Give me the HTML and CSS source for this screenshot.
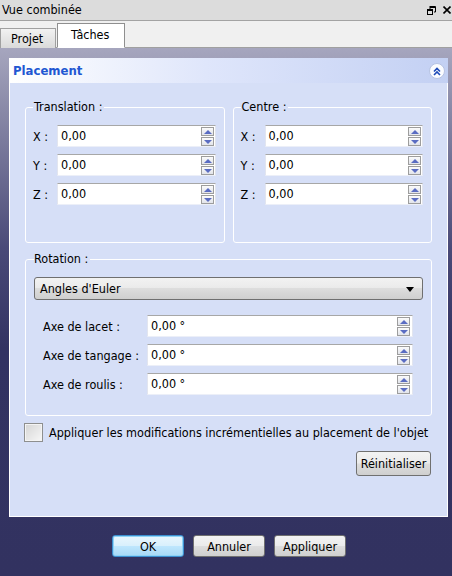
FILE: index.html
```html
<!DOCTYPE html>
<html lang="fr">
<head>
<meta charset="utf-8">
<title>Vue combinée</title>
<link rel="stylesheet" href="styles.css">
</head>
<body>
<div class="window">
  <div class="titlebar">
    <span class="title">Vue combinée</span>
    <div class="winbtns">
      <svg width="9" height="9" viewBox="0 0 9 9"><path d="M3 0.5h5.5v5.5h-1.5M3 1.5h5.5" fill="none" stroke="#000" stroke-width="1"/><path d="M3 0v3" stroke="#000"/><rect x="0.5" y="3.5" width="5" height="5" fill="none" stroke="#000"/><path d="M0.5 4.5h5" stroke="#000"/></svg>
      <svg width="8" height="8" viewBox="0 0 8 8"><path d="M0.5 0.5L7.5 7.5M7.5 0.5L0.5 7.5" stroke="#000" stroke-width="1.6"/></svg>
    </div>
  </div>
  <div class="tabbar">
    <div class="tab">Projet</div>
    <div class="tab active">Tâches</div>
  </div>
  <div class="taskarea">
    <div class="panel">
      <div class="panel-head">
        <span class="panel-title">Placement</span>
        <svg class="collapse" width="16" height="16" viewBox="0 0 16 16"><circle cx="8" cy="8" r="7.5" fill="#fbfcff" stroke="#b7c3e2"/><polyline points="5,8.5 8,5.5 11,8.5" fill="none" stroke="#1c49b8" stroke-width="1.6"/><polyline points="5,12 8,9 11,12" fill="none" stroke="#1c49b8" stroke-width="1.6"/></svg>
      </div>
      <div class="panel-body">
        <div class="groups-row">
          <fieldset class="group pos">
            <legend>Translation :</legend>
            <div class="row"><span class="lbl">X :</span><div class="field"><span class="val">0,00</span><span class="spin"><span class="up"></span><span class="dn"></span></span></div></div>
            <div class="row"><span class="lbl">Y :</span><div class="field"><span class="val">0,00</span><span class="spin"><span class="up"></span><span class="dn"></span></span></div></div>
            <div class="row"><span class="lbl">Z :</span><div class="field"><span class="val">0,00</span><span class="spin"><span class="up"></span><span class="dn"></span></span></div></div>
          </fieldset>
          <fieldset class="group pos">
            <legend>Centre :</legend>
            <div class="row"><span class="lbl">X :</span><div class="field"><span class="val">0,00</span><span class="spin"><span class="up"></span><span class="dn"></span></span></div></div>
            <div class="row"><span class="lbl">Y :</span><div class="field"><span class="val">0,00</span><span class="spin"><span class="up"></span><span class="dn"></span></span></div></div>
            <div class="row"><span class="lbl">Z :</span><div class="field"><span class="val">0,00</span><span class="spin"><span class="up"></span><span class="dn"></span></span></div></div>
          </fieldset>
        </div>
        <fieldset class="group rotation">
          <legend>Rotation :</legend>
          <div class="combo"><span>Angles d'Euler</span><span class="arrow"></span></div>
          <div class="rot-rows">
            <div class="row"><span class="lbl wide">Axe de lacet :</span><div class="field"><span class="val">0,00 °</span><span class="spin"><span class="up"></span><span class="dn"></span></span></div></div>
            <div class="row"><span class="lbl wide">Axe de tangage :</span><div class="field"><span class="val">0,00 °</span><span class="spin"><span class="up"></span><span class="dn"></span></span></div></div>
            <div class="row"><span class="lbl wide">Axe de roulis :</span><div class="field"><span class="val">0,00 °</span><span class="spin"><span class="up"></span><span class="dn"></span></span></div></div>
          </div>
        </fieldset>
        <div class="check"><span class="box"></span><span class="check-text">Appliquer les modifications incrémentielles au placement de l'objet</span></div>
        <div class="reset-row"><span class="btn reset">Réinitialiser</span></div>
      </div>
    </div>
    <div class="dialog-buttons">
      <span class="btn dlg default">OK</span>
      <span class="btn dlg">Annuler</span>
      <span class="btn dlg">Appliquer</span>
    </div>
  </div>
</div>
</body>
</html>
```

FILE: styles.css
```css
* { box-sizing: border-box; }
html, body { margin: 0; padding: 0; }
body {
  width: 452px;
  height: 576px;
  overflow: hidden;
  font-family: "DejaVu Sans Condensed", "DejaVu Sans", Verdana, sans-serif;
  font-size: 12.5px;
  color: #000;
}
.window { display: flex; flex-direction: column; height: 576px; }

.titlebar {
  height: 21px;
  background: #dcdcdc;
  border-bottom: 1px solid #a3a3a3;
  display: flex;
  align-items: center;
  justify-content: space-between;
  padding: 0 1px 1px 2px;
}
.winbtns { display: flex; align-items: center; gap: 7px; margin-top: 1px; }

.tabbar {
  height: 27px;
  background: #f0f0f0;
  border-bottom: 1px solid #a0a0a0;
  display: flex;
  align-items: flex-end;
}
.tab {
  height: 20px;
  width: 56px;
  border: 1px solid #a0a0a0;
  border-bottom: none;
  background: linear-gradient(#f2f2f2, #dadada);
  padding-left: 10px;
  line-height: 19px;
  margin-bottom: -1px;
  margin-right: 1px;
}
.tab.active {
  height: 25px;
  width: 68px;
  background: #fff;
  border-color: #8f8f8f;
  padding-left: 13px;
  line-height: 22px;
  border-bottom: 1px solid #fff;
}

.taskarea {
  flex: 1;
  background: linear-gradient(180deg, #a6a6be 0px, #8a8aa8 60px, #4a4a78 200px, #333362 300px, #323260 528px);
  padding: 10px 4px 0 9px;
  display: flex;
  flex-direction: column;
}

.panel { width: 439px; height: 459px; display: flex; flex-direction: column; }
.panel-head {
  height: 25px;
  background: linear-gradient(90deg, #ffffff 0%, #dfe6fb 45%, #c3d0f3 100%);
  display: flex;
  align-items: center;
  justify-content: space-between;
  padding: 0 3px 0 4px;
}
.panel-title { font-weight: bold; color: #2257d2; font-size: 13px; }
.collapse { display: block; }

.panel-body {
  flex: 1;
  background: #d6dff7;
  border: 1px solid #ffffff;
  border-top: none;
  padding: 17px 15px 0 15px;
  display: flex;
  flex-direction: column;
}

.groups-row { display: flex; gap: 8px; }

fieldset.group {
  margin: 0;
  min-width: 0;
  border: 1px solid #ffffff;
  border-radius: 3px;
}
fieldset.group legend {
  padding: 0 2px 0 1px;
  margin-left: 0;
  line-height: 14px;
}
.group.pos {
  width: 200px;
  padding: 11px 8px 37px 7px;
  display: flex;
  flex-direction: column;
  gap: 7px;
}

.row { display: flex; align-items: center; height: 22px; }
.lbl { width: 24px; flex: none; }
.lbl.wide { width: 104px; }
.field {
  flex: 1;
  height: 22px;
  background: #fff;
  border-top: 1px solid #a7a7a7;
  border-left: 1px solid #e2e5ef;
  border-right: 1px solid #e2e5ef;
  border-bottom: 1px solid #eceff8;
  display: flex;
  align-items: center;
  justify-content: space-between;
  padding: 0 1px 0 3px;
}
.val { line-height: 20px; }

.spin { display: flex; flex-direction: column; gap: 1px; }
.spin .up, .spin .dn {
  width: 13px;
  height: 9px;
  border: 1px solid #9d9d9d;
  background: linear-gradient(#fbfbfb, #e2e4ea);
  position: relative;
}
.spin .up::after, .spin .dn::after {
  content: "";
  position: absolute;
  left: 2px;
  width: 0; height: 0;
  border-left: 4px solid transparent;
  border-right: 4px solid transparent;
}
.spin .up::after { top: 2px; border-bottom: 4px solid #5a6cc2; }
.spin .dn::after { top: 2px; border-top: 4px solid #5a6cc2; }

.group.rotation {
  margin-top: 9px;
  padding: 11px 8px 20px 8px;
}
.group.rotation legend { padding-left: 0; }
.combo {
  height: 23px;
  border: 1px solid #6f6f6f;
  border-radius: 3px;
  background: linear-gradient(#f2f2f2 0%, #ebebeb 45%, #dddddd 50%, #cfcfcf 100%);
  display: flex;
  align-items: center;
  justify-content: space-between;
  padding: 0 8px 0 5px;
}
.arrow {
  width: 0; height: 0;
  border-left: 4px solid transparent;
  border-right: 4px solid transparent;
  border-top: 5px solid #000;
  margin-top: 1px;
}
.rot-rows {
  margin-top: 15px;
  padding: 0 10px 0 9px;
  display: flex;
  flex-direction: column;
  gap: 7px;
}
.rot-rows .field { padding-right: 2px; }

.check {
  display: flex;
  align-items: center;
  gap: 6px;
  margin-top: 7px;
  margin-left: -1px;
  height: 19px;
}
.check-text { white-space: nowrap; }
.box {
  width: 19px;
  height: 19px;
  border: 1px solid #8e8f8f;
  box-shadow: inset 0 0 0 1px #f4f4f4;
  background: linear-gradient(135deg, #d5d5d5, #f7f7f7);
  flex: none;
}

.reset-row { display: flex; justify-content: flex-end; margin-top: 9px; padding-right: 1px; }
.btn {
  display: inline-flex;
  align-items: center;
  justify-content: center;
  height: 25px;
  padding: 0 3px;
  border: 1px solid #707070;
  border-radius: 3px;
  background: linear-gradient(#f3f3f3 0%, #ebebeb 48%, #dddddd 52%, #cfcfcf 100%);
}
.btn.reset { width: 75px; padding: 0; }

.dialog-buttons {
  display: flex;
  justify-content: center;
  gap: 9px;
  margin-top: 18px;
  padding-left: 1px;
}
.btn.dlg { width: 72px; height: 22px; }
.btn.default {
  border-color: #3c8fd0;
  box-shadow: inset 0 0 0 1px #8fd3f5;
  background: linear-gradient(#eaf6fd 0%, #d9f0fc 48%, #bee6fd 52%, #a7d9f5 100%);
}
```
